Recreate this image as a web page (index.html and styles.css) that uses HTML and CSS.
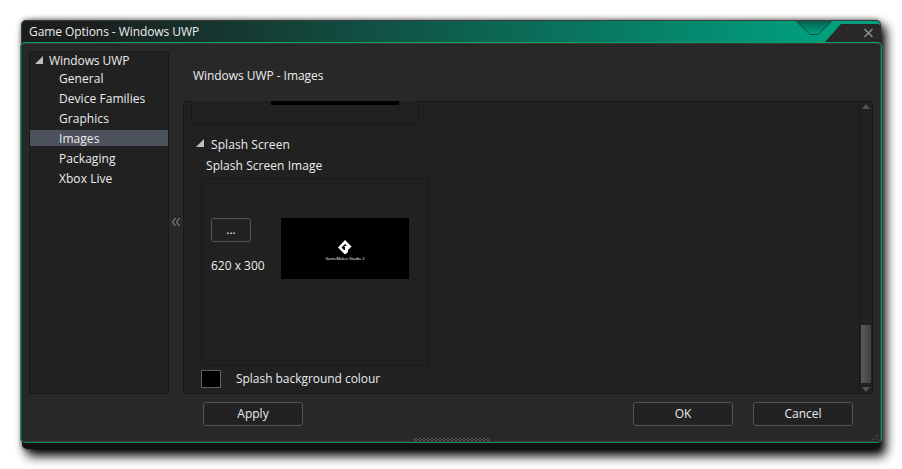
FILE: index.html
```html
<!DOCTYPE html>
<html lang="en">
<head>
<meta charset="utf-8">
<title>Game Options - Windows UWP</title>
<link rel="stylesheet" href="styles.css">
</head>
<body>
<div class="window">
  <header class="titlebar">
    <h1 class="title">Game Options - Windows UWP</h1>
    <svg class="title-art" width="90" height="22" viewBox="0 0 90 22">
      <defs><linearGradient id="notch" x1="0" y1="0" x2="0" y2="1"><stop offset="0" stop-color="#05604f"/><stop offset="1" stop-color="#02a583"/></linearGradient></defs>
      <path d="M5 0H41L28 14H19Z" fill="url(#notch)"/>
      <path d="M5.500 0.500L19 13.500H27L40.500 0.500" fill="none" stroke="#07503f"/>
      <path d="M33 22L50 3H87Q90 4 90 7V22Z" fill="#282828"/>
      <path d="M73.500 8L81.500 16M81.500 8L73.500 16" stroke="#8b93a0" stroke-width="1.500"/>
    </svg>
  </header>
  <div class="frame">
    <div class="body">
      <nav class="tree">
        <div class="tree-root"><svg class="tri" width="8" height="8"><path d="M8 0V8H0Z"/></svg>Windows UWP</div>
        <div class="tree-item">General</div>
        <div class="tree-item">Device Families</div>
        <div class="tree-item">Graphics</div>
        <div class="tree-item selected">Images</div>
        <div class="tree-item">Packaging</div>
        <div class="tree-item">Xbox Live</div>
      </nav>
      <div class="splitter"><svg width="8" height="8" viewBox="0 0 8 8"><path d="M3.500 0L0.500 4L3.500 8M7.500 0L4.500 4L7.500 8"/></svg></div>
      <main class="content">
        <h2 class="heading">Windows UWP - Images</h2>
        <div class="pane">
          <div class="scroll">
            <div class="prev"><div class="prev-image"></div></div>
            <div class="section"><svg class="tri" width="8" height="8"><path d="M8 0V8H0Z"/></svg>Splash Screen</div>
            <div class="label">Splash Screen Image</div>
            <div class="image-box">
              <div class="picker"><button class="button browse">...</button><span class="size">620 x 300</span></div>
              <div class="preview">
                <svg width="16" height="15" viewBox="0 0 16 15"><path d="M8 0L14 6H10L8 4L4.500 7.500L7 10H8V7L7 6H15L11 10V12L8 14.500L1 7.500Z" fill="#fff"/></svg>
                <span class="brand">GameMaker Studio 2</span>
              </div>
            </div>
            <div class="colour-row"><span class="swatch"></span>Splash background colour</div>
          </div>
          <div class="scrollbar">
            <svg width="8" height="5"><path d="M4 0L8 5H0Z"/></svg>
            <div class="thumb"></div>
            <svg width="8" height="5"><path d="M0 0H8L4 5Z"/></svg>
          </div>
        </div>
      </main>
    </div>
    <footer class="footer">
      <button class="button wide">Apply</button>
      <span class="spacer"></span>
      <button class="button wide">OK</button>
      <button class="button wide">Cancel</button>
    </footer>
    <div class="grip"></div>
    <svg class="corner" width="9" height="9"><path d="M1 8L8 1M4 8L8 4M7 8L8 7"/></svg>
  </div>
</div>
</body>
</html>
```
FILE: styles.css
```css
* { box-sizing: border-box; }
body { margin: 0; padding: 20px 22px; height: 469px; overflow: hidden; background: #fff; color: #ececec; font: 12px/18px "Open Sans", sans-serif; }
h1, h2 { margin: 0; font: inherit; }
.window { width: 858px; height: 429px; background: #111; border-radius: 5px; box-shadow: 5px 6px 11px 1px #000, 0 0 4px 1px rgba(0, 0, 0, .4); }
.titlebar { display: flex; justify-content: space-between; height: 25px; margin: 0 -1px; padding-left: 7px; border: 1px solid #393d3c; border-bottom: 0; border-radius: 5px 5px 0 0; background: linear-gradient(90deg, #1b1d1d 0, #1b1f1e 8%, #009f7e 93%); }
.title { padding-top: 2px; letter-spacing: -0.07px; }
.title-art { margin-right: -1px; }
.frame { position: relative; display: flex; flex-direction: column; height: 401px; margin: -3px -2px 0; padding: 8px 8px 0; border: 1px solid #00a060; border-bottom-color: #008c53; border-radius: 5px; background: #282828; box-shadow: inset 0 0 0 1px #3a3a3a; }
.body { display: flex; height: 343px; }
.tree { width: 140px; padding: 1px 0 0; border: 1px solid #191919; border-radius: 2px; background: #212121; }
.tree-root { display: flex; align-items: center; gap: 6px; height: 16px; margin-bottom: 1px; padding-left: 5px; letter-spacing: -0.08px; }
.tri { fill: #c0c0c0; transform: translateY(-1px); }
.tree-item { height: 16px; margin-bottom: 4px; padding-left: 29px; line-height: 18px; letter-spacing: 0.05px; }
.selected { background: #4b525c; }
.splitter { display: flex; align-items: center; justify-content: center; width: 14px; padding-bottom: 2px; }
.splitter svg, .corner { fill: none; stroke: #999; }
.content { flex: 1; }
.heading { height: 50px; padding: 16px 0 0 10px; letter-spacing: -0.05px; }
.pane { display: flex; height: 293px; border: 1px solid #191919; border-radius: 2px; background: #212121; }
.scroll { flex: 1; }
.prev { width: 228px; height: 24px; margin: -1px 0 0 7px; padding-left: 79px; border: 1px solid #191919; border-top: 0; border-radius: 0 0 2px 2px; background: #212121; }
.prev-image { width: 128px; height: 4px; background: #000; }
.section { display: flex; align-items: center; gap: 7px; height: 18px; margin: 11px 0 0 12px; letter-spacing: 0.08px; }
.section .tri { transform: translateY(-2px); }
.label { height: 18px; margin: 3px 0 0 22px; letter-spacing: 0.05px; }
.image-box { display: flex; width: 228px; height: 188px; margin: 3px 0 0 17px; padding: 39px 0 0 9px; border: 1px solid #191919; border-radius: 2px; }
.picker { display: flex; flex-direction: column; gap: 15px; width: 70px; }
.button { height: 24px; padding: 0; border: 1px solid #555; border-radius: 3px; background: #222; color: inherit; font: inherit; }
.browse { width: 40px; }
.preview { display: flex; flex-direction: column; align-items: center; width: 128px; height: 61px; padding-top: 22px; background: #000; }
.brand { color: #fff; font-size: 4px; line-height: 8px; }
.colour-row { display: flex; align-items: center; gap: 15px; margin: 4px 0 0 17px; letter-spacing: -0.04px; }
.swatch { width: 20px; height: 18px; border: 1px solid #606060; background: #000; }
.scrollbar { display: flex; flex-direction: column; align-items: center; width: 13px; padding: 2px 0 1px; border-left: 1px solid #191919; fill: #555; }
.thumb { width: 10px; height: 58px; margin: 216px 0 4px; background: linear-gradient(90deg, #5b5b5b, #404040); }
.footer { display: flex; gap: 20px; padding: 8px 20px 0 174px; }
.spacer { flex: 1; }
.wide { width: 100px; }
.grip { position: absolute; left: 392px; bottom: 1px; width: 77px; height: 3px; background: conic-gradient(#555 25%, transparent 0 50%, #555 0 75%, transparent 0) 0 0 / 4px 2px; }
.corner { position: absolute; right: 1px; bottom: 1px; stroke: #666; stroke-dasharray: 1 1; }
```
